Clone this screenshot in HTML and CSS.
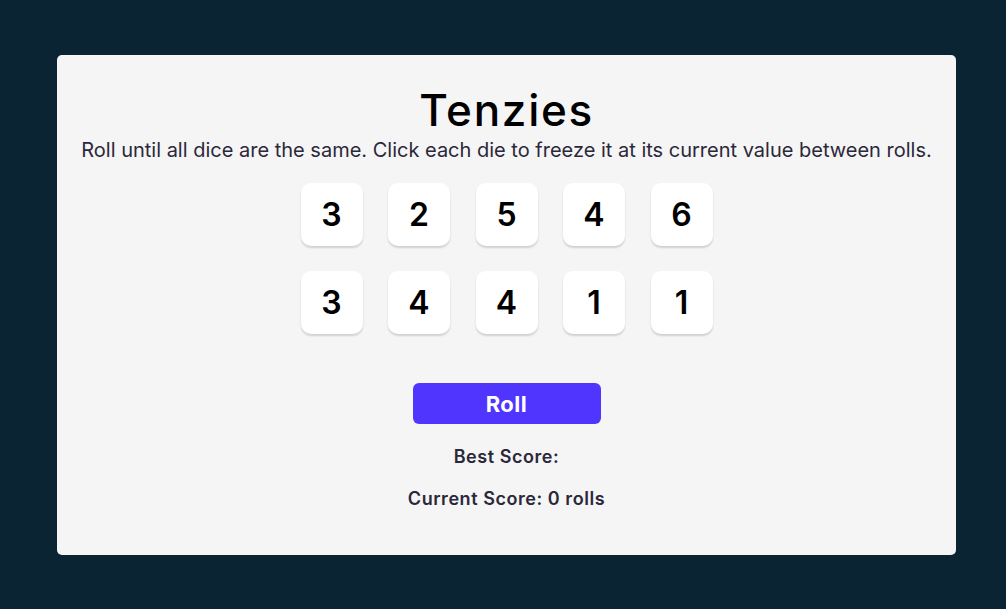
FILE: index.html
```html
<!DOCTYPE html>
<html>
<head>
<meta charset="utf-8">
<link rel="stylesheet" href="styles.css">
</head>
<body>
<main class="card">
  <h1 class="title">Tenzies</h1>
  <p class="instructions">Roll until all dice are the same. Click each die to freeze it at its current value between rolls.</p>
  <div class="dice">
    <button class="die">3</button>
    <button class="die">2</button>
    <button class="die">5</button>
    <button class="die">4</button>
    <button class="die">6</button>
    <button class="die">3</button>
    <button class="die">4</button>
    <button class="die">4</button>
    <button class="die">1</button>
    <button class="die">1</button>
  </div>
  <button class="roll">Roll</button>
  <p class="score">Best Score: </p>
  <p class="score">Current Score: 0 rolls</p>
</main>
</body>
</html>
```
FILE: styles.css
```css
html, body {
  margin: 0;
  padding: 0;
}
body {
  background: #0B2434;
  height: 609px;
  padding: 55px 50px 54px 57px;
  box-sizing: border-box;
  font-family: Inter, "Noto Sans", sans-serif;
}
.card {
  width: 899px;
  height: 500px;
  background: #F5F5F5;
  border-radius: 5px;
  display: flex;
  flex-direction: column;
  align-items: center;
  box-sizing: border-box;
  padding-top: 33px;
}
.title {
  margin: 0;
  font-size: 44px;
  font-weight: 500;
  letter-spacing: 1.7px;
  line-height: 44px;
  color: #000;
}
.instructions {
  margin: 5px 0 0;
  font-size: 20px;
  font-weight: 400;
  color: #2B283A;
  line-height: 26px;
}
.dice {
  display: grid;
  grid-template-columns: repeat(5, 62px);
  grid-auto-rows: 63px;
  column-gap: 25.5px;
  row-gap: 25px;
  margin-top: 20px;
}
.die {
  border: none;
  background: #FFFFFF;
  border-radius: 10px;
  box-shadow: 0 2px 2px rgba(0, 0, 0, 0.15);
  font-family: Inter, "Noto Sans", sans-serif;
  font-size: 32px;
  font-weight: 600;
  color: #000;
  padding: 0;
}
.roll {
  margin-top: 49px;
  width: 188px;
  height: 41px;
  border: none;
  border-radius: 6px;
  background: #5035FF;
  color: #FFFFFF;
  font-family: Inter, "Noto Sans", sans-serif;
  font-size: 22px;
  font-weight: 700;
  letter-spacing: 0.5px;
}
.score {
  margin: 22px 0 0;
  font-size: 18px;
  font-weight: 600;
  letter-spacing: 0.55px;
  color: #2B283A;
  line-height: 22px;
}
.score + .score {
  margin-top: 20px;
}
```
